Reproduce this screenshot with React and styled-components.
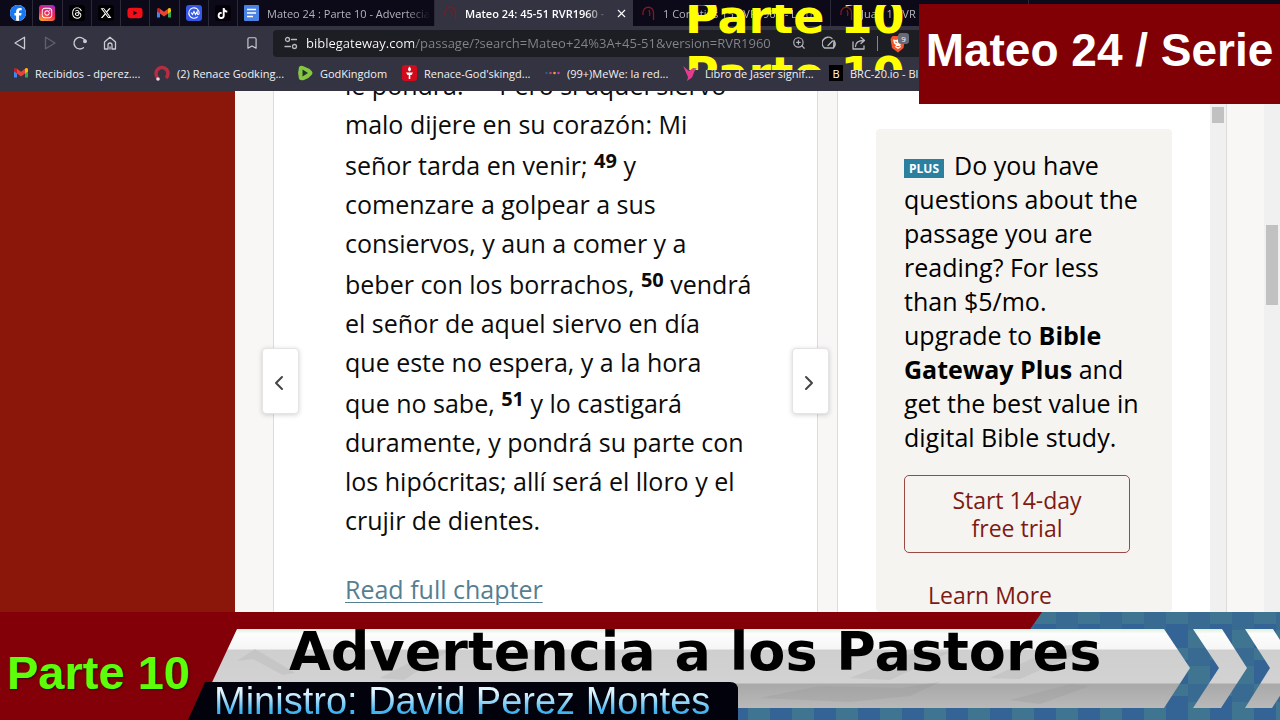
import styled, { createGlobalStyle } from "styled-components"
import { FaFacebook, FaInstagram, FaThreads, FaXTwitter, FaYoutube, FaTiktok } from "react-icons/fa6"
import { X, ZoomIn, Bookmark, ChevronLeft, ChevronRight } from "lucide-react"

const GlobalStyle = createGlobalStyle`
    * {
        box-sizing: border-box;
    }
    body {
        margin: 0;
        background: #f8f7f5;
        font-family: "Open Sans", "Noto Sans", sans-serif;
    }
    button {
        font-family: inherit;
        cursor: pointer;
    }
`

const Screen = styled.div`
    position: relative;
    display: flex;
    flex-direction: column;
    height: 100vh;
    overflow: hidden;
`

/* ---------- browser ---------- */
const TabStrip = styled.nav`
    display: flex;
    flex: none;
    height: 26px;
    background: #0c0a18;
    overflow: hidden;
`
const PinnedTabs = styled.div`
    display: grid;
    grid-template-columns: repeat(8, 1fr);
    flex: none;
    width: 238px;
    padding-left: 4px;
`
const PinnedTab = styled.button`
    display: flex;
    align-items: center;
    justify-content: center;
    padding: 0;
    border: none;
    border-right: 1px solid #2b2a36;
    background: none;
    color: ${(props) => props.$color};
`
const IconTile = styled.span`
    display: flex;
    align-items: center;
    justify-content: center;
    width: ${(props) => props.$size || 16}px;
    height: 16px;
    border-radius: ${(props) => props.$radius || "3px"};
    background: ${(props) => props.$bg};
    color: #fff;
    font-size: 11px;
`
const Tab = styled.button`
    display: flex;
    align-items: center;
    gap: 8px;
    flex: none;
    width: ${(props) => (props.$first ? "197px" : "198px")};
    padding: 0 4px 0 ${(props) => (props.$first ? "6px" : "9px")};
    border: none;
    border-right: 1px solid ${(props) => (props.$active ? "#333341" : "#2b2a36")};
    background: ${(props) => (props.$active ? "#333341" : "none")};
    color: ${(props) => (props.$active ? "#fff" : "#b4b3bc")};
    font-size: 11px;
    font-weight: ${(props) => (props.$active ? 600 : 400)};
`
const TabTitle = styled.span`
    flex: 1;
    overflow: hidden;
    white-space: nowrap;
    text-align: left;
    mask-image: linear-gradient(to right, #000 85%, transparent);
`
const Toolbar = styled.div`
    display: flex;
    align-items: center;
    flex: none;
    height: 34px;
    padding-left: 13px;
    background: #333341;
`
const ToolbarButtons = styled.div`
    display: flex;
    align-items: center;
    gap: 16px;
    width: 232px;
`
const ToolButton = styled.button`
    display: flex;
    padding: 0;
    border: none;
    background: none;
    color: ${(props) => (props.$dim ? "#62626e" : "#cbcbd2")};
`
const AddressBar = styled.div`
    display: flex;
    align-items: center;
    flex: 1;
    gap: 8px;
    height: 27px;
    margin-left: 14px;
    padding-left: 11px;
    border-radius: 4px 0 0 4px;
    background: #1d1d24;
    color: #b6b6bd;
`
const AddressInput = styled.input`
    width: 478px;
    height: 24px;
    padding: 0;
    border: none;
    outline: none;
    background: linear-gradient(to right, #fff 108px, #85858d 108px);
    background-clip: text;
    color: transparent;
    font-family: "Open Sans", "Noto Sans", sans-serif;
    font-size: 13px;
`
const AddressActions = styled.div`
    display: flex;
    align-items: center;
    gap: 16px;
`
const Divider = styled.span`
    width: 1px;
    height: 15px;
    margin: 0 -5px;
    background: #85858d;
`
const BookmarksBar = styled.div`
    display: flex;
    align-items: center;
    flex: none;
    height: 31px;
    padding: 0 0 5px 14px;
    background: #333341;
    overflow: hidden;
`
const BookmarkLink = styled.a`
    position: relative;
    z-index: 2;
    display: flex;
    align-items: center;
    gap: 7px;
    flex: none;
    width: ${(props) => props.$width}px;
    color: #f1f1f4;
    font-size: 11px;
    white-space: nowrap;
    text-decoration: none;
`

/* ---------- page ---------- */
const Page = styled.main`
    display: flex;
    flex: 1;
    min-height: 0;
    overflow: hidden;
`
const Rail = styled.div`
    flex: none;
    width: 235px;
    background: #8a170a;
`
const Passage = styled.article`
    position: relative;
    flex: 1;
    margin: 0 19px 0 38px;
    padding: 0 60px 0 71px;
    border-left: 1px solid #dddcda;
    border-right: 1px solid #dddcda;
    background: #fff;
    color: #0b0b0b;
    font-size: 25px;
    line-height: 39px;
`
const Verses = styled.p`
    margin: -27px 0 30px;
    white-space: nowrap;
`
const VerseNumber = styled.sup`
    font-size: 20px;
    font-weight: 700;
    line-height: 33px;
    vertical-align: 7px;
`
const ChapterLink = styled.a`
    color: #557f91;
    text-decoration: underline;
    text-decoration-thickness: 1px;
    text-underline-offset: 3px;
`
const PageArrow = styled.button`
    position: absolute;
    top: 257px;
    ${(props) => props.$side}: -12px;
    display: flex;
    align-items: center;
    justify-content: center;
    width: 37px;
    height: 66px;
    padding: 4px 3px 0 0;
    border: 1px solid #e4e4e4;
    border-radius: 4px;
    background: #fff;
    box-shadow: 0 1px 5px rgba(0, 0, 0, 0.18);
    color: #444;
`
const Aside = styled.aside`
    flex: none;
    width: 373px;
    padding: 38px 38px 0;
    border-left: 1px solid #dddcda;
    background: #fff;
`
const PlusCard = styled.section`
    height: 100%;
    padding: 19px 28px 0;
    border-radius: 4px;
    background: #f6f4f1;
    font-size: 25px;
    line-height: 34px;
    white-space: nowrap;
`
const PlusText = styled.p`
    margin: 0 0 21px;
`
const PlusBadge = styled.span`
    display: inline-block;
    margin-right: 10px;
    padding: 0 5px;
    background: #2c809f;
    color: #fff;
    font-size: 12px;
    font-weight: 700;
    line-height: 19px;
    vertical-align: 2px;
`
const TrialButton = styled.button`
    width: 226px;
    padding: 10px 40px;
    border: 1px solid #9a4a45;
    border-radius: 5px;
    background: none;
    color: #7d1a14;
    font-size: 23px;
    line-height: 28px;
`
const LearnMore = styled.a`
    display: block;
    padding: 25px 24px;
    color: #7d1a14;
    font-size: 23px;
    text-decoration: none;
`
const ScrollTrack = styled.div`
    flex: none;
    width: 16px;
    padding: ${(props) => props.$offset}px 2px 0;
    background: #f0f0f0;
`
const ScrollThumb = styled.div`
    height: ${(props) => props.$height}px;
    background: #c1c1c1;
`
const Gutter = styled.div`
    flex: none;
    width: 38px;
    border-left: 1px solid #dddcda;
`

/* ---------- broadcast graphics ---------- */
const Ticker = styled.div`
    position: absolute;
    z-index: 1;
    top: 5px;
    left: 685px;
    height: 65px;
    overflow: hidden;
    color: #ffff00;
    font-family: "DejaVu Sans", sans-serif;
    font-size: 46px;
    font-weight: 700;
    line-height: 57px;
    white-space: nowrap;
`
const TickerRoll = styled.div`
    display: flex;
    flex-direction: column;
    margin-top: -16px;
`
const SeriesTag = styled.div`
    position: absolute;
    z-index: 3;
    top: 4px;
    right: 0;
    display: flex;
    align-items: center;
    justify-content: center;
    width: 361px;
    height: 100px;
    background: #800005;
    color: #fff;
    font-family: "Liberation Sans", sans-serif;
    font-size: 46px;
    font-weight: 700;
    white-space: nowrap;
    padding-bottom: 8px;
`
const LowerThird = styled.footer`
    position: relative;
    display: grid;
    grid-template-columns: 200px 1fr;
    flex: none;
    height: 108px;
    background: #830009;
    white-space: nowrap;
`
const Backdrop = styled.svg`
    position: absolute;
    inset: 0;
    width: 100%;
    height: 100%;
`
const PartLabel = styled.strong`
    position: relative;
    padding-left: 7px;
    color: #5cff0a;
    font-family: "Liberation Sans", sans-serif;
    font-size: 47px;
    line-height: 122px;
    text-shadow: 1px 1px 2px #300;
`
const Titles = styled.div`
    position: relative;
    display: flex;
    flex-direction: column;
`
const Title = styled.h1`
    margin: 0;
    padding: 8px 0 0 89px;
    color: #000;
    font-family: "DejaVu Sans", sans-serif;
    font-size: 54px;
    font-weight: 700;
    line-height: 64px;
`
const Minister = styled.p`
    align-self: flex-start;
    margin: 0;
    padding-left: 14px;
    background: linear-gradient(#e2f6ff 25%, #3fb4f0 80%);
    background-clip: text;
    color: transparent;
    font-family: "Liberation Sans", sans-serif;
    font-size: 38px;
    line-height: 34px;
`

function GmailIcon() {
    return (
        <svg width="14" height="12" viewBox="0 0 28 22">
            <path d="M0 4v16h6V9z" fill="#4285f4" />
            <path d="M28 4v16h-6V9z" fill="#34a853" />
            <path d="M22 2.500l2-1.500q4-1 4 3v4l-6 4z" fill="#fbbc04" />
            <path d="M0 8V4q0-4 4-3l2 1.500V12z" fill="#c5221f" />
            <path d="M6 2.500l8 6 8-6V12l-8 6-8-6z" fill="#ea4335" />
        </svg>
    )
}
function DocsIcon() {
    return (
        <svg width="15" height="16" viewBox="0 0 15 16">
            <rect width="15" height="16" rx="1" fill="#4a82e4" />
            <path d="M3 4.500h9M3 8h9M3 11.500h6" stroke="#fff" strokeWidth="1.600" />
        </svg>
    )
}
function CoinIcon() {
    return (
        <svg width="16" height="16" viewBox="0 0 16 16">
            <rect width="16" height="16" rx="3" fill="#3557e8" />
            <path d="M11.800 11.600A5.200 5.200 0 1 1 13.200 8c0 2-2 2-2 0V6.500L9.500 9.500 8 6.500 6.500 9.500 5 7.500" fill="none" stroke="#fff" strokeWidth="1.100" />
        </svg>
    )
}
function GatewayIcon() {
    return (
        <svg width="13" height="15" viewBox="0 0 13 15" fill="none" stroke="#7c1b25" strokeWidth="1.300">
            <path d="M1 9V6.500a5 5 0 0 1 10.500 0V14M7 4q1.500 3 .5 6" />
        </svg>
    )
}
function RenaceIcon() {
    return (
        <svg width="16" height="16" viewBox="0 0 16 16">
            <path d="M3.500 12.500A6 6 0 1 1 12 13" fill="none" stroke="#b52d41" strokeWidth="3.600" />
            <circle cx="4" cy="14" r="1.800" fill="#f3dadd" />
        </svg>
    )
}
function RumbleIcon() {
    return (
        <svg width="16" height="16" viewBox="0 0 16 16">
            <path d="M2 2q2-2 5-.5 5 1.500 8 5 1 1.500 0 3-3 4-8 5.500-3 1-5-1-1.800-6 0-12z" fill="#85c742" />
            <path d="M5.500 4.500l5.500 3.500-5.500 3.500z" fill="#22332a" />
        </svg>
    )
}
function TorchIcon() {
    return (
        <svg width="15" height="16" viewBox="0 0 15 16">
            <rect width="15" height="16" rx="3" fill="#d20a1b" />
            <path d="M7.500 1.500q3 3 0 5-3-2 0-5zM4 7.500h7L9.500 10H8.300v4H6.700v-4H5.500z" fill="#fff" />
        </svg>
    )
}
function MeweIcon() {
    return (
        <svg width="15" height="6" viewBox="0 0 15 6">
            <circle cx="1.500" cy="3" r="1.200" fill="#2e5a8f" />
            <circle cx="5.500" cy="3" r="1.300" fill="#cf3b6d" />
            <circle cx="9.500" cy="3" r="1.300" fill="#e8a63b" />
            <circle cx="13.500" cy="3" r="1.300" fill="#c23bb0" />
        </svg>
    )
}
function BirdIcon() {
    return (
        <svg width="15" height="15" viewBox="0 0 15 15">
            <path d="M0 0l6 5 4-3 3 .500-2 4-2 5-5 3.500 1-4z" fill="#e53a8e" />
            <path d="M10 2l4 .500-3 2z" fill="#7c7c88" />
        </svg>
    )
}
function BraveIcon() {
    return (
        <svg width="20" height="20" viewBox="0 0 20 20">
            <path d="M3.500 3h10L16 6l-1.500 9L9 19.500 3 15 1.500 6z" fill="#f4562a" />
            <path d="M4 6.500l3 .5 2-.5 2 .5 3-.5-1 4-2 1.500 1 2-3 2-3-2 1-2-2-1.500z" fill="#fff" />
            <path d="M6 9l2 .500M12 9l-2 .500M7.500 13.500h3" stroke="#f4562a" />
            <rect x="9" y="0" width="11" height="11" rx="3" fill="#6a6a76" />
            <text x="14.500" y="8.500" fill="#fff" fontSize="8" textAnchor="middle">9</text>
        </svg>
    )
}

function LineIcon({ children }) {
    return (
        <svg width="14" height="14" viewBox="0 0 14 14" fill="none" stroke="currentColor" strokeWidth="1.300" strokeLinejoin="round" strokeLinecap="round">
            {children}
        </svg>
    )
}
const BackIcon = () => <LineIcon><path d="M11.500 1.200v11.600L2 7z" /></LineIcon>
const ForwardIcon = () => <LineIcon><path d="M2.500 1.200v11.600L12 7z" /></LineIcon>
const ReloadIcon = () => (
    <LineIcon>
        <path d="M10.500 11.700A5.800 5.800 0 1 1 11.800 4.200" />
        <circle cx="12" cy="5.300" r="1.300" fill="currentColor" />
    </LineIcon>
)
const HomeIcon = () => <LineIcon><path d="M1.500 6L7 1.200 12.500 6v7H9V9a2 2 0 0 0-4 0v4H1.500zM7 11v2" /></LineIcon>
const SiteIcon = () => (
    <LineIcon>
        <circle cx="3.500" cy="3.500" r="2" />
        <path d="M7.500 3.500h5M1 10.500h5.500" />
        <circle cx="10.500" cy="10.500" r="2" />
    </LineIcon>
)
const GaugeIcon = () => <LineIcon><path d="M2.500 12A6 6 0 0 1 10 2.500M12 4.500a6 6 0 0 1-.500 7.500zM2.500 12h9M6 9.500L10.500 5" /></LineIcon>
const ShareIcon = () => <LineIcon><path d="M1 6v7h11v-3M3.500 10.500c0-4 3-6 8.500-6M9 1.500l3.500 3L9 7.500" /></LineIcon>

const bookmarks = [
    { label: "Recibidos - dperez....", icon: <GmailIcon />, width: 140 },
    { label: "(2) Renace Godking...", icon: <RenaceIcon />, width: 143 },
    { label: "GodKingdom", icon: <RumbleIcon />, width: 105 },
    { label: "Renace-God'skingd...", icon: <TorchIcon />, width: 143 },
    { label: "(99+)MeWe: la red...", icon: <MeweIcon />, width: 138 },
    { label: "Libro de Jaser signif...", icon: <BirdIcon />, width: 146 },
    { label: "BRC-20.io - Bl", icon: <IconTile $bg="#000" $radius="0" $size={14}>B</IconTile>, width: 140 },
]

function Browser() {
    return (
        <header>
            <TabStrip>
                <PinnedTabs>
                    <PinnedTab aria-label="Facebook"><IconTile $bg="#fff" $radius="8px"><FaFacebook size={16} color="#1877f2" /></IconTile></PinnedTab>
                    <PinnedTab aria-label="Instagram"><IconTile $bg="linear-gradient(20deg, #fdb52a, #f0264f 45%, #a52bd0)"><FaInstagram size={12} /></IconTile></PinnedTab>
                    <PinnedTab aria-label="Threads"><IconTile $bg="#000"><FaThreads size={12} /></IconTile></PinnedTab>
                    <PinnedTab aria-label="X"><IconTile $bg="#000"><FaXTwitter size={12} /></IconTile></PinnedTab>
                    <PinnedTab aria-label="YouTube" $color="#f20d17"><FaYoutube size={16} /></PinnedTab>
                    <PinnedTab aria-label="Gmail"><GmailIcon /></PinnedTab>
                    <PinnedTab aria-label="CoinMarketCap"><CoinIcon /></PinnedTab>
                    <PinnedTab aria-label="TikTok"><IconTile $bg="#050008"><FaTiktok size={11} /></IconTile></PinnedTab>
                </PinnedTabs>
                <Tab $first>
                    <DocsIcon />
                    <TabTitle>Mateo 24 : Parte 10 - Advertecia</TabTitle>
                </Tab>
                <Tab $active>
                    <GatewayIcon />
                    <TabTitle>Mateo 24: 45-51 RVR1960 -</TabTitle>
                    <X size={13} />
                </Tab>
                <Tab>
                    <GatewayIcon />
                    <TabTitle>1 Corintios 15 RVR1960 - La or</TabTitle>
                </Tab>
                <Tab>
                    <GatewayIcon />
                    <TabTitle>Juan 1 RVR</TabTitle>
                </Tab>
            </TabStrip>
            <Toolbar>
                <ToolbarButtons>
                    <ToolButton aria-label="Back"><BackIcon /></ToolButton>
                    <ToolButton aria-label="Forward" $dim><ForwardIcon /></ToolButton>
                    <ToolButton aria-label="Reload"><ReloadIcon /></ToolButton>
                    <ToolButton aria-label="Home"><HomeIcon /></ToolButton>
                </ToolbarButtons>
                <ToolButton aria-label="Bookmark"><Bookmark size={14} /></ToolButton>
                <AddressBar>
                    <SiteIcon />
                    <AddressInput aria-label="Address" defaultValue="biblegateway.com/passage/?search=Mateo+24%3A+45-51&version=RVR1960" />
                    <AddressActions>
                        <ZoomIn size={14} />
                        <GaugeIcon />
                        <ShareIcon />
                        <Divider />
                        <BraveIcon />
                    </AddressActions>
                </AddressBar>
            </Toolbar>
            <BookmarksBar>
                {bookmarks.map((item) => (
                    <BookmarkLink href="#" key={item.label} $width={item.width}>
                        {item.icon}
                        {item.label}
                    </BookmarkLink>
                ))}
            </BookmarksBar>
        </header>
    )
}

function LowerThirdBackdrop() {
    return (
        <Backdrop viewBox="0 0 1280 108" preserveAspectRatio="none" aria-hidden="true">
            <defs>
                <linearGradient id="silver" x1="0" y1="17" x2="0" y2="96" gradientUnits="userSpaceOnUse">
                    <stop offset="0" stopColor="#dfeedd" />
                    <stop offset="0.060" stopColor="#fdfdfd" />
                    <stop offset="0.250" stopColor="#f6f6f6" />
                    <stop offset="0.270" stopColor="#cfcfcf" />
                    <stop offset="0.680" stopColor="#d2d2d2" />
                    <stop offset="0.700" stopColor="#a9a9a9" />
                    <stop offset="1" stopColor="#b9b9b9" />
                </linearGradient>
                <pattern id="blocks" width="44" height="36" patternUnits="userSpaceOnUse">
                    <rect width="44" height="36" fill="#3f7590" />
                    <rect width="22" height="18" fill="#396a92" />
                    <rect x="22" y="12" width="22" height="24" fill="#346396" />
                </pattern>
            </defs>
            <rect width="1280" height="108" fill="#830009" />
            <path d="M1042 0H1280V108H700V90H980z" fill="url(#blocks)" />
            <path d="M237 17H1164L1190 56 1164 96H200z" fill="url(#silver)" />
            <path d="M237 49l18-12 40 24-12 2-30-16zM380 66l50-26 20-2-46 30zM850 66l60-24 40-2-60 28zM990 66l70-32 40-3-80 36z" fill="#bcbcbc" opacity="0.500" />
            <path d="M760 86l60-12 80 2 40-6-30 14-60 6zM1010 88l60-16 20 2-50 18z" fill="#999" opacity="0.300" />
            <path d="M1193 17h29l25 39-26 40h-28l26-40zM1245 17h28l25 39-26 40h-27l25-40z" fill="url(#silver)" />
            <path d="M205 70H730q8 0 8 8v30H188z" fill="#02020d" />
        </Backdrop>
    )
}

function App() {
    return (
        <Screen>
            <GlobalStyle />
            <Browser />
            <Page>
                <Rail />
                <Passage>
                    <Verses>
                        le pondrá. <VerseNumber>48</VerseNumber> Pero si aquel siervo<br />
                        malo dijere en su corazón: Mi<br />
                        señor tarda en venir; <VerseNumber>49</VerseNumber> y<br />
                        comenzare a golpear a sus<br />
                        consiervos, y aun a comer y a<br />
                        beber con los borrachos, <VerseNumber>50</VerseNumber> vendrá<br />
                        el señor de aquel siervo en día<br />
                        que este no espera, y a la hora<br />
                        que no sabe, <VerseNumber>51</VerseNumber> y lo castigará<br />
                        duramente, y pondrá su parte con<br />
                        los hipócritas; allí será el lloro y el<br />
                        crujir de dientes.
                    </Verses>
                    <ChapterLink href="#">Read full chapter</ChapterLink>
                    <PageArrow $side="left" aria-label="Previous"><ChevronLeft size={24} /></PageArrow>
                    <PageArrow $side="right" aria-label="Next"><ChevronRight size={24} /></PageArrow>
                </Passage>
                <Aside>
                    <PlusCard>
                        <PlusText>
                            <PlusBadge>PLUS</PlusBadge>Do you have<br />
                            questions about the<br />
                            passage you are<br />
                            reading? For less<br />
                            than $5/mo.<br />
                            upgrade to <b>Bible</b><br />
                            <b>Gateway Plus</b> and<br />
                            get the best value in<br />
                            digital Bible study.
                        </PlusText>
                        <TrialButton>Start 14-day<br />free trial</TrialButton>
                        <LearnMore href="#">Learn More</LearnMore>
                    </PlusCard>
                </Aside>
                <ScrollTrack $offset={16}><ScrollThumb $height={16} /></ScrollTrack>
                <Gutter />
                <ScrollTrack $offset={134}><ScrollThumb $height={80} /></ScrollTrack>
            </Page>
            <LowerThird>
                <LowerThirdBackdrop />
                <PartLabel>Parte 10</PartLabel>
                <Titles>
                    <Title>Advertencia a los Pastores</Title>
                    <Minister>Ministro: David Perez Montes</Minister>
                </Titles>
            </LowerThird>
            <Ticker>
                <TickerRoll>
                    <span>Parte 10</span>
                    <span>Parte 10</span>
                </TickerRoll>
            </Ticker>
            <SeriesTag>Mateo 24 / Serie</SeriesTag>
        </Screen>
    )
}

export default App
